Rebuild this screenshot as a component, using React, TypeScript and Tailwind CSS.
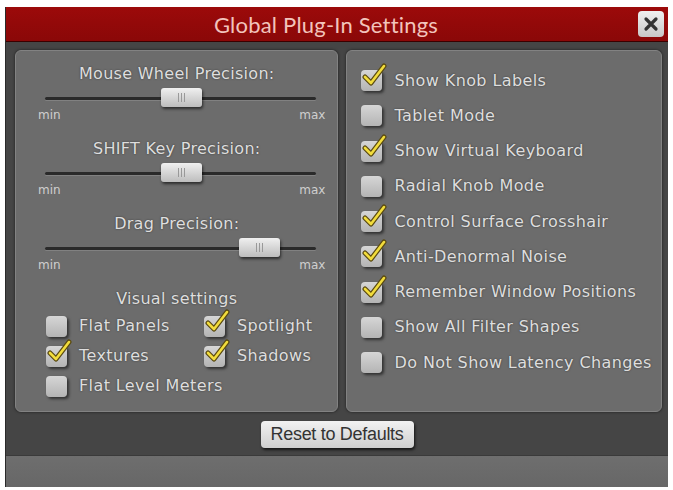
import React from 'react';

const labelFont = { fontFamily: '"DejaVu Sans", Verdana, sans-serif' };

function Checkbox({ checked }: { checked: boolean }) {
    return (
        <div className="relative w-[21px] h-[21px] shrink-0">
            <div className="w-full h-full rounded-[4px] bg-gradient-to-b from-[#d6d6d6] to-[#b4b4b4] shadow-[2px_2px_3px_rgba(0,0,0,0.55)]" />
            {checked && (
                <svg className="absolute -top-[7px] left-[1px]" width="26" height="26" viewBox="0 0 26 26">
                    <path d="M3 14 L9 20 L22 3" fill="none" stroke="#5a4a10" strokeWidth="5" strokeLinecap="round" strokeLinejoin="round" />
                    <path d="M3 14 L9 20 L22 3" fill="none" stroke="#f2dc3c" strokeWidth="2.6" strokeLinecap="round" strokeLinejoin="round" />
                </svg>
            )}
        </div>
    );
}

function Slider({ label, pos, last }: { label: string; pos: number; last?: boolean }) {
    return (
        <div className={last ? '' : 'mb-[18px]'}>
            <div className="h-5 leading-5 text-center text-[16px] tracking-[0.3px] text-[#dedede] [text-shadow:0_0_2px_rgba(0,0,0,0.5)]" style={labelFont}>
                {label}
            </div>
            <div className="relative mt-1 h-5 ml-[29px] mr-[21px] flex items-center">
                <div className="w-full h-[3px] bg-[#2a2a2a] rounded-full shadow-[0_1px_0_rgba(255,255,255,0.15)]" />
                <div
                    className="absolute top-0 w-[41px] h-[19px] rounded-[3px] bg-gradient-to-b from-[#f0f0f0] to-[#bdbdbd] shadow-[1px_2px_3px_rgba(0,0,0,0.6)] flex items-center justify-center gap-[2px]"
                    style={{ left: pos }}
                >
                    <span className="w-[1px] h-[9px] bg-[#999]" />
                    <span className="w-[1px] h-[9px] bg-[#999]" />
                    <span className="w-[1px] h-[9px] bg-[#999]" />
                </div>
            </div>
            <div className="mt-[1px] h-3 flex justify-between pl-[22px] pr-[12px] text-[12px] leading-3 text-[#cfcfcf]" style={labelFont}>
                <span>min</span>
                <span>max</span>
            </div>
        </div>
    );
}

function Option({ label, checked, rowH = 'h-[35.25px]' }: { label: string; checked: boolean; rowH?: string }) {
    return (
        <div className={`flex items-center gap-[12px] ${rowH}`}>
            <Checkbox checked={checked} />
            <span className="text-[16px] tracking-[0.4px] whitespace-nowrap text-[#dedede] [text-shadow:0_0_2px_rgba(0,0,0,0.5)]" style={labelFont}>{label}</span>
        </div>
    );
}

const options: [string, boolean][] = [
    ['Show Knob Labels', true],
    ['Tablet Mode', false],
    ['Show Virtual Keyboard', true],
    ['Radial Knob Mode', false],
    ['Control Surface Crosshair', true],
    ['Anti-Denormal Noise', true],
    ['Remember Window Positions', true],
    ['Show All Filter Shapes', false],
    ['Do Not Show Latency Changes', false],
];

export default function App() {
    return (
        <div className="w-[673px] h-[490px] bg-white pt-[7px] px-[5px] pb-[3px]">
            <div className="w-[663px] h-[480px] flex flex-col bg-[#454545] border-l border-[#2a2a2a]">
                {/* barra de título */}
                <div className="h-[35px] shrink-0 bg-gradient-to-b from-[#9c0a0a] to-[#8a0808] flex items-center pl-[8px] pr-[4px] border-b border-[#3a0000]">
                    <div className="w-[26px]" />
                    <div className="flex-1 pr-[26px] text-center text-[22px] text-[#f2c4bc] tracking-[0.2px]" style={{ fontFamily: 'Lato, "Open Sans", sans-serif' }}>
                        Global Plug-In Settings
                    </div>
                    <div className="w-[26px] h-[26px] rounded-[4px] bg-gradient-to-b from-[#f0f0f0] to-[#c8c8c8] flex items-center justify-center">
                        <svg width="16" height="16" viewBox="0 0 16 16">
                            <path d="M3 3 L13 13 M13 3 L3 13" stroke="#333" strokeWidth="3.2" strokeLinecap="round" />
                        </svg>
                    </div>
                </div>

                <div className="flex gap-[8px] pl-[9px] pr-[6px] pt-[8px] h-[370px] shrink-0">
                    {/* panel izquierdo */}
                    <div className="w-[324px] h-[362px] rounded-[6px] bg-[#6c6c6c] border border-[#828282] shadow-[0_0_3px_rgba(0,0,0,0.6)] pt-[13px]">
                        <Slider label="Mouse Wheel Precision:" pos={116} />
                        <Slider label="SHIFT Key Precision:" pos={116} />
                        <Slider label="Drag Precision:" pos={194} last />
                        <div className="mt-[18px] h-5 leading-5 text-center text-[16px] tracking-[0.3px] text-[#dedede] [text-shadow:0_0_2px_rgba(0,0,0,0.5)]" style={labelFont}>
                            Visual settings
                        </div>
                        <div className="mt-[2px] pl-[30px] grid grid-cols-[158px_1fr]">
                            <Option label="Flat Panels" checked={false} rowH="h-[30px]" />
                            <Option label="Spotlight" checked rowH="h-[30px]" />
                            <Option label="Textures" checked rowH="h-[30px]" />
                            <Option label="Shadows" checked rowH="h-[30px]" />
                            <div className="col-span-2">
                                <Option label="Flat Level Meters" checked={false} rowH="h-[30px]" />
                            </div>
                        </div>
                    </div>

                    {/* panel derecho */}
                    <div className="w-[316px] h-[362px] rounded-[6px] bg-[#6c6c6c] border border-[#828282] shadow-[0_0_3px_rgba(0,0,0,0.6)] pt-[12px] pl-[14px]">
                        {options.map(([l, c]) => (
                            <Option key={l} label={l} checked={c} />
                        ))}
                    </div>
                </div>

                <div className="flex justify-center pt-[9px] h-[43px] shrink-0">
                    <button
                        className="w-[153px] h-[27px] rounded-[4px] bg-gradient-to-b from-[#f2f2f2] to-[#cfcfcf] shadow-[1px_2px_3px_rgba(0,0,0,0.7)] text-[18px] leading-[27px] text-[#333] tracking-[-0.3px]"
                        style={{ fontFamily: '"Liberation Sans", Arial, sans-serif' }}
                    >
                        Reset to Defaults
                    </button>
                </div>

                <div className="flex-1 bg-gradient-to-b from-[#6e6e6e] to-[#676767] border-t border-[#3a3a3a]" />
            </div>
        </div>
    );
}
